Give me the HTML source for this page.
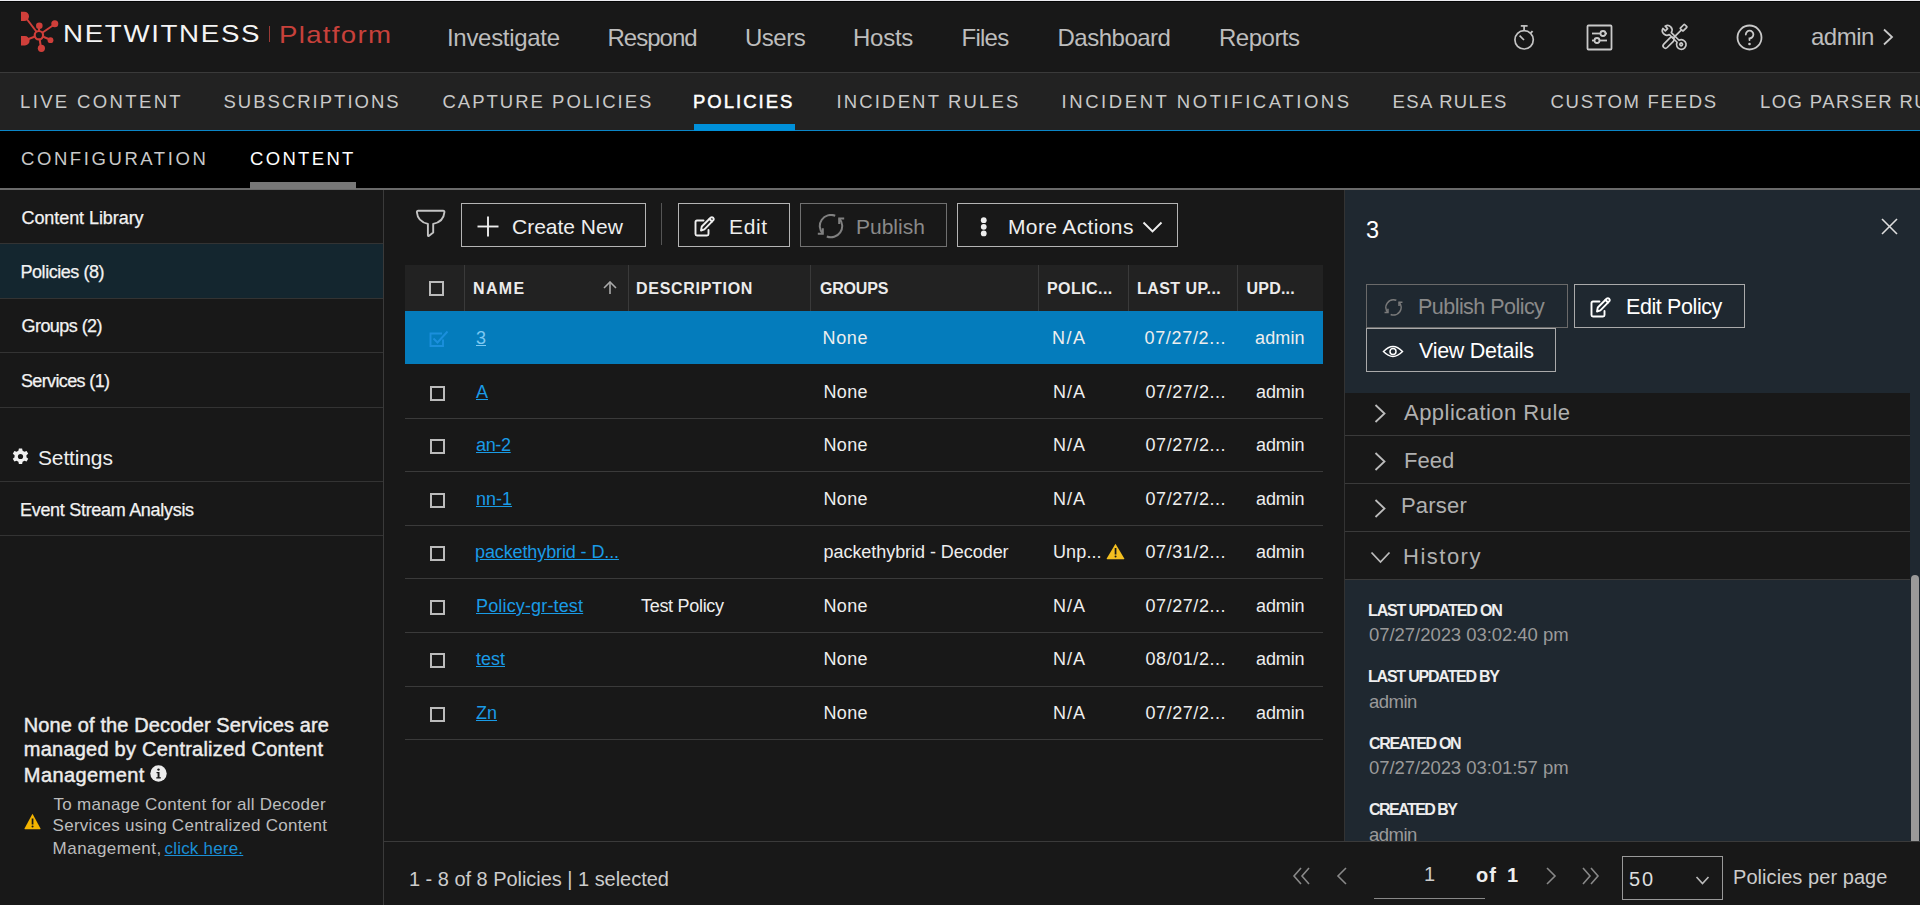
<!DOCTYPE html>
<html><head><meta charset="utf-8"><title>NetWitness Platform - Content Policies</title>
<style>
html,body{margin:0;padding:0;}
body{width:1920px;height:905px;overflow:hidden;position:relative;background:#181818;font-family:"Liberation Sans",sans-serif;}
.r{position:absolute;display:block;}
.t{position:absolute;white-space:nowrap;line-height:1;font-family:"Liberation Sans",sans-serif;}
</style></head><body>
<div class="r" style="left:0px;top:0px;width:1920px;height:1px;background:#ececf0;"></div>
<div class="r" style="left:0px;top:1px;width:1920px;height:1px;background:#050505;"></div>
<div class="r" style="left:0px;top:2px;width:1920px;height:70px;background:#181818;"></div>
<div class="r" style="left:0px;top:72px;width:1920px;height:1px;background:#3a3a3a;"></div>
<div class="r" style="left:0px;top:73px;width:1920px;height:57px;background:#222222;"></div>
<div class="r" style="left:0px;top:130px;width:1920px;height:1px;background:#0b86c8;"></div>
<div class="r" style="left:694px;top:124px;width:101px;height:7px;background:#0090da;"></div>
<div class="r" style="left:0px;top:131px;width:1920px;height:57px;background:#000000;"></div>
<div class="r" style="left:0px;top:188px;width:1920px;height:2px;background:#6a6a6a;"></div>
<div class="r" style="left:250px;top:182px;width:106px;height:7px;background:#777777;"></div>
<div class="r" style="left:0px;top:190px;width:1920px;height:715px;background:#181818;"></div>
<div class="r" style="left:383px;top:190px;width:1px;height:715px;background:#3a3a3a;"></div>
<div class="r" style="left:0px;top:244px;width:383px;height:54px;background:#14262f;"></div>
<div class="r" style="left:0px;top:243px;width:383px;height:1px;background:#333333;"></div>
<div class="r" style="left:0px;top:298px;width:383px;height:1px;background:#333333;"></div>
<div class="r" style="left:0px;top:352px;width:383px;height:1px;background:#333333;"></div>
<div class="r" style="left:0px;top:407px;width:383px;height:1px;background:#333333;"></div>
<div class="r" style="left:0px;top:481px;width:383px;height:1px;background:#333333;"></div>
<div class="r" style="left:0px;top:535px;width:383px;height:1px;background:#333333;"></div>
<div class="r" style="left:1344px;top:190px;width:1px;height:651px;background:#333333;"></div>
<div class="r" style="left:1345px;top:190px;width:575px;height:203px;background:#1f2830;"></div>
<div class="r" style="left:1345px;top:393px;width:565px;height:187px;background:#181818;"></div>
<div class="r" style="left:1345px;top:435px;width:565px;height:1px;background:#3a3a3a;"></div>
<div class="r" style="left:1345px;top:483px;width:565px;height:1px;background:#3a3a3a;"></div>
<div class="r" style="left:1345px;top:531px;width:565px;height:1px;background:#3a3a3a;"></div>
<div class="r" style="left:1345px;top:579px;width:565px;height:1px;background:#3a3a3a;"></div>
<div class="r" style="left:1910px;top:393px;width:10px;height:448px;background:#1f2830;"></div>
<div class="r" style="left:1345px;top:580px;width:565px;height:261px;background:#1f2830;"></div>
<div class="r" style="left:1911px;top:575px;width:8px;height:266px;background:#9a9a9a;border-radius:4px 4px 0 0;"></div>
<div class="r" style="left:384px;top:841px;width:1536px;height:1px;background:#3a3a3a;"></div>
<div class="r" style="left:384px;top:842px;width:1536px;height:63px;background:#181818;"></div>
<svg class="r" style="left:18px;top:8px;" width="44" height="46" viewBox="0 0 44 46">
<g fill="#cf3f3a" stroke="#cf3f3a">
<line x1="8" y1="10" x2="21" y2="27" stroke-width="2"/>
<line x1="21" y1="27" x2="37" y2="16" stroke-width="2"/>
<line x1="21" y1="27" x2="8" y2="32" stroke-width="2"/>
<line x1="21" y1="27" x2="33" y2="32" stroke-width="2"/>
<line x1="21" y1="27" x2="23" y2="40" stroke-width="2"/>
<line x1="21" y1="27" x2="21" y2="18" stroke-width="2"/>
<path d="M3 3.7 h3.3 a4.7 4.7 0 0 1 0 9.4 h-3.3 z" stroke="none"/>
<path d="M3 28 h3.9 a4.7 4.7 0 0 1 0 9.4 h-3.9 z" stroke="none"/>
<circle cx="21.3" cy="17.7" r="3.3" stroke="none"/>
<circle cx="36.8" cy="15.8" r="3.5" stroke="none"/>
<circle cx="32.5" cy="32.2" r="2.9" stroke="none"/>
<circle cx="23.4" cy="40.3" r="3.6" stroke="none"/>
<circle cx="20.9" cy="27.2" r="4.2" fill="#181818" stroke-width="2.2"/>
</g></svg>
<div class="r" style="left:268.5px;top:26px;width:1.5px;height:15.5px;background:#9a3a36;"></div>
<svg class="r" style="left:1512px;top:23px;" width="25" height="29" viewBox="0 0 25 29"><g fill="none" stroke="#c4c4c4" stroke-width="1.7" stroke-linecap="butt">
<circle cx="12.1" cy="16.8" r="9.2"/><line x1="8.8" y1="2.9" x2="15.6" y2="2.9"/><line x1="12.1" y1="2.9" x2="12.1" y2="7.6"/>
<line x1="18.3" y1="10.4" x2="20.6" y2="8.1" stroke-width="2"/><line x1="7.6" y1="12.6" x2="12" y2="17"/></g></svg>
<svg class="r" style="left:1586px;top:24px;" width="27" height="27" viewBox="0 0 27 27"><g fill="none" stroke="#c9c9c9" stroke-width="1.8">
<rect x="1.5" y="1.5" width="24" height="24" rx="1"/>
<line x1="6" y1="9.5" x2="21" y2="9.5"/><line x1="6" y1="16.5" x2="21" y2="16.5"/>
<circle cx="17" cy="9.5" r="2.5" fill="#181818"/><circle cx="11" cy="16.5" r="2.5" fill="#181818"/></g></svg>
<svg class="r" style="left:1660px;top:23px;" width="30" height="30" viewBox="0 0 30 30"><g fill="none" stroke="#c9c9c9" stroke-width="1.7" stroke-linejoin="round" stroke-linecap="round">
<g transform="translate(14.4 13.9) rotate(45)">
<rect x="-2" y="-16" width="4" height="6" rx="0.8"/>
<line x1="0" y1="-10" x2="0" y2="1.5"/>
<rect x="-2.4" y="1.5" width="4.8" height="13.5" rx="2.4"/>
</g>
<g transform="translate(14.8 15) rotate(-45)">
<path d="M -1.6 -15.2 L -1.6 -11.8 L 1.6 -11.8 L 1.6 -15.2 A 4.6 4.6 0 0 1 1.4 -6.3 L 1.4 4.6 A 4.8 4.8 0 1 1 -1.4 4.6 L -1.4 -6.3 A 4.6 4.6 0 0 1 -1.6 -15.2 Z"/>
<circle cx="0" cy="9" r="1.3"/>
</g></g></svg>
<svg class="r" style="left:1736px;top:24px;" width="27" height="27" viewBox="0 0 27 27"><g fill="none" stroke="#c9c9c9" stroke-width="1.8" stroke-linecap="round">
<circle cx="13.5" cy="13.5" r="12"/><path d="M9.8 10.5 A3.8 3.8 0 1 1 13.5 14.3 L13.5 16"/></g>
<circle cx="13.5" cy="20" r="1.3" fill="#c9c9c9"/></svg>
<svg class="r" style="left:1882px;top:28px;" width="13" height="18" viewBox="0 0 13 18"><polyline points="2,1.5 10,9 2,16.5" fill="none" stroke="#c9c9c9" stroke-width="1.8"/></svg>
<svg class="r" style="left:12px;top:448px;" width="17" height="17" viewBox="0 0 17 17"><g transform="translate(8.5 8.5)" fill="#f0f0f0">
<path d="M-1.6 -8 h3.2 l0.5 2.3 a6 6 0 0 1 1.8 1 l2.2 -0.8 l1.6 2.8 l-1.8 1.5 a6 6 0 0 1 0 2 l1.8 1.5 l-1.6 2.8 l-2.2 -0.8 a6 6 0 0 1 -1.8 1 l-0.5 2.3 h-3.2 l-0.5 -2.3 a6 6 0 0 1 -1.8 -1 l-2.2 0.8 l-1.6 -2.8 l1.8 -1.5 a6 6 0 0 1 0 -2 l-1.8 -1.5 l1.6 -2.8 l2.2 0.8 a6 6 0 0 1 1.8 -1 z"/>
<circle r="2.6" fill="#181818"/></g></svg>
<svg class="r" style="left:150px;top:765px;" width="17" height="17" viewBox="0 0 17 17"><circle cx="8.5" cy="8.5" r="8.2" fill="#ececec"/>
<rect x="7.6" y="7" width="1.9" height="6" fill="#181818"/><rect x="6.3" y="12.2" width="4.5" height="1.3" fill="#181818"/><rect x="6.5" y="7" width="2.5" height="1.2" fill="#181818"/><circle cx="8.5" cy="4.6" r="1.2" fill="#181818"/></svg>
<svg class="r" style="left:24px;top:813px;" width="17" height="17" viewBox="0 0 17 17"><path d="M8.5 0.8 L16.5 15.5 Q16.8 16.3 16 16.3 H1 Q0.2 16.3 0.5 15.5 Z" fill="#f4b400"/>
<rect x="7.7" y="5.5" width="1.7" height="6" fill="#181818"/><circle cx="8.55" cy="13.6" r="1" fill="#181818"/></svg>
<svg class="r" style="left:414px;top:207px;" width="32" height="32" viewBox="0 0 32 32"><path d="M4.2 3.8 H29.1 Q30.6 3.8 30.4 5.3 Q29.6 14.6 19.2 16.9 V25.6 L14.8 28.9 Q13.9 29.3 13.9 28.3 V16.9 Q3.6 14.6 2.9 5.3 Q2.8 3.8 4.2 3.8 Z" fill="none" stroke="#c4c4c4" stroke-width="1.9" stroke-linejoin="round"/></svg>
<div class="r" style="left:461px;top:203px;width:185px;height:44px;box-sizing:border-box;border:1px solid #b4b4b4;background:transparent;"></div>
<svg class="r" style="left:477px;top:216px;" width="22" height="21" viewBox="0 0 22 21"><g stroke="#eeeeee" stroke-width="1.9"><line x1="11" y1="0.5" x2="11" y2="20.5"/><line x1="0.5" y1="10.5" x2="21.5" y2="10.5"/></g></svg>
<div class="r" style="left:660.5px;top:203px;width:1.5px;height:42px;background:#555555;"></div>
<div class="r" style="left:678px;top:203px;width:112px;height:44px;box-sizing:border-box;border:1px solid #b4b4b4;background:transparent;"></div>
<svg class="r" style="left:694px;top:216px;" width="22" height="22" viewBox="0 0 22 22"><g fill="none" stroke="#eeeeee" stroke-width="1.9" stroke-linejoin="round" stroke-linecap="round">
<path d="M9.5 4.5 H3 Q1.5 4.5 1.5 6 V18 Q1.5 19.5 3 19.5 H13 Q14.5 19.5 14.5 18 V14"/>
<path d="M7 14.5 L7.8 10.5 L16.8 1.5 Q18 0.7 19.2 1.8 Q20.2 3 19.4 4.2 L10.4 13.3 Z"/><line x1="15.5" y1="3" x2="18" y2="5.5"/></g></svg>
<div class="r" style="left:800px;top:203px;width:147px;height:44px;box-sizing:border-box;border:1px solid #707070;background:transparent;"></div>
<svg class="r" style="left:817px;top:214px;" width="28" height="26" viewBox="0 0 28 26"><g fill="none" stroke="#808080" stroke-width="2"><path d="M22.19 4.46 A11.2 11.2 0 0 1 9.80 22.48 M5.81 19.74 A11.2 11.2 0 0 1 18.20 1.72"/><path d="M27.19 4.46 H22.19 V9.96"/><path d="M0.81 19.74 H5.81 V14.24"/></g></svg>
<div class="r" style="left:957px;top:203px;width:221px;height:44px;box-sizing:border-box;border:1px solid #b4b4b4;background:transparent;"></div>
<svg class="r" style="left:979px;top:215px;" width="10" height="23" viewBox="0 0 10 23"><g fill="#eeeeee"><circle cx="4.75" cy="5.2" r="2.9"/><circle cx="4.75" cy="11.8" r="2.9"/><circle cx="4.75" cy="18.4" r="2.9"/></g></svg>
<svg class="r" style="left:1142px;top:220px;" width="21" height="14" viewBox="0 0 21 14"><polyline points="1.5,2.5 10.5,11.5 19.5,2.5" fill="none" stroke="#eeeeee" stroke-width="1.9"/></svg>
<div class="r" style="left:405px;top:265px;width:918px;height:46px;background:#222222;"></div>
<div class="r" style="left:464px;top:265px;width:1px;height:46px;background:#3a3a3a;"></div>
<div class="r" style="left:628px;top:265px;width:1px;height:46px;background:#3a3a3a;"></div>
<div class="r" style="left:810px;top:265px;width:1px;height:46px;background:#3a3a3a;"></div>
<div class="r" style="left:1038px;top:265px;width:1px;height:46px;background:#3a3a3a;"></div>
<div class="r" style="left:1128px;top:265px;width:1px;height:46px;background:#3a3a3a;"></div>
<div class="r" style="left:1237px;top:265px;width:1px;height:46px;background:#3a3a3a;"></div>
<div class="r" style="left:429px;top:281px;width:15px;height:15px;box-sizing:border-box;border:2px solid #bbbbbb;background:transparent;"></div>
<svg class="r" style="left:602px;top:281px;" width="16" height="14" viewBox="0 0 16 14"><g fill="none" stroke="#aaaaaa" stroke-width="1.6"><line x1="8" y1="1" x2="8" y2="13"/><polyline points="2,7 8,1 14,7"/></g></svg>
<div class="r" style="left:405px;top:311px;width:918px;height:53px;background:#047cbc;"></div>
<div class="r" style="left:405px;top:418px;width:918px;height:1px;background:#3a3a3a;"></div>
<div class="r" style="left:405px;top:471px;width:918px;height:1px;background:#3a3a3a;"></div>
<div class="r" style="left:405px;top:525px;width:918px;height:1px;background:#3a3a3a;"></div>
<div class="r" style="left:405px;top:578px;width:918px;height:1px;background:#3a3a3a;"></div>
<div class="r" style="left:405px;top:632px;width:918px;height:1px;background:#3a3a3a;"></div>
<div class="r" style="left:405px;top:686px;width:918px;height:1px;background:#3a3a3a;"></div>
<div class="r" style="left:405px;top:739px;width:918px;height:1px;background:#3a3a3a;"></div>
<svg class="r" style="left:429px;top:330px;" width="22" height="18" viewBox="0 0 22 18"><g fill="none" stroke="#1b8fdc" stroke-width="1.9"><path d="M13 3.5 H1.5 V16 H14 V9.5"/><polyline points="4.5,8.5 8.5,12.5 18.5,1.5"/></g></svg>
<div class="r" style="left:430px;top:386px;width:15px;height:15px;box-sizing:border-box;border:2px solid #bbbbbb;background:transparent;"></div>
<div class="r" style="left:430px;top:439px;width:15px;height:15px;box-sizing:border-box;border:2px solid #bbbbbb;background:transparent;"></div>
<div class="r" style="left:430px;top:493px;width:15px;height:15px;box-sizing:border-box;border:2px solid #bbbbbb;background:transparent;"></div>
<div class="r" style="left:430px;top:546px;width:15px;height:15px;box-sizing:border-box;border:2px solid #bbbbbb;background:transparent;"></div>
<div class="r" style="left:430px;top:600px;width:15px;height:15px;box-sizing:border-box;border:2px solid #bbbbbb;background:transparent;"></div>
<div class="r" style="left:430px;top:653px;width:15px;height:15px;box-sizing:border-box;border:2px solid #bbbbbb;background:transparent;"></div>
<div class="r" style="left:430px;top:707px;width:15px;height:15px;box-sizing:border-box;border:2px solid #bbbbbb;background:transparent;"></div>
<svg class="r" style="left:1106px;top:543px;" width="19" height="17" viewBox="0 0 19 17"><path d="M9.5 0.8 L18.3 15.4 Q18.6 16.2 17.8 16.2 H1.2 Q0.4 16.2 0.7 15.4 Z" fill="#f4c020"/>
<rect x="8.7" y="5" width="1.7" height="6.5" fill="#181818"/><circle cx="9.55" cy="13.5" r="1" fill="#181818"/></svg>
<svg class="r" style="left:1880px;top:217px;" width="19" height="19" viewBox="0 0 19 19"><g stroke="#dddddd" stroke-width="1.6"><line x1="2" y1="2" x2="17" y2="17"/><line x1="17" y1="2" x2="2" y2="17"/></g></svg>
<div class="r" style="left:1366px;top:284px;width:202px;height:44px;box-sizing:border-box;border:1px solid #6a6a6a;background:transparent;"></div>
<svg class="r" style="left:1384px;top:299px;" width="19" height="18" viewBox="0 0 28 26"><g fill="none" stroke="#7a7a7a" stroke-width="2.3"><path d="M22.19 4.46 A11.2 11.2 0 0 1 9.80 22.48 M5.81 19.74 A11.2 11.2 0 0 1 18.20 1.72"/><path d="M27.19 4.46 H22.19 V9.96"/><path d="M0.81 19.74 H5.81 V14.24"/></g></svg>
<div class="r" style="left:1574px;top:284px;width:171px;height:44px;box-sizing:border-box;border:1px solid #aaaaaa;background:transparent;"></div>
<svg class="r" style="left:1590px;top:297px;" width="22" height="22" viewBox="0 0 22 22"><g fill="none" stroke="#ffffff" stroke-width="1.9" stroke-linejoin="round" stroke-linecap="round">
<path d="M9.5 4.5 H3 Q1.5 4.5 1.5 6 V18 Q1.5 19.5 3 19.5 H13 Q14.5 19.5 14.5 18 V14"/>
<path d="M7 14.5 L7.8 10.5 L16.8 1.5 Q18 0.7 19.2 1.8 Q20.2 3 19.4 4.2 L10.4 13.3 Z"/><line x1="15.5" y1="3" x2="18" y2="5.5"/></g></svg>
<div class="r" style="left:1366px;top:328px;width:190px;height:44px;box-sizing:border-box;border:1px solid #aaaaaa;background:transparent;"></div>
<svg class="r" style="left:1382px;top:344px;" width="22" height="15" viewBox="0 0 22 15"><g fill="none" stroke="#ffffff" stroke-width="1.5"><path d="M1.5 7.5 Q11 -2.3 20.5 7.5 Q11 17.3 1.5 7.5 Z"/><circle cx="11" cy="7.5" r="3"/></g></svg>
<svg class="r" style="left:1373px;top:403px;" width="15" height="21" viewBox="0 0 15 21"><polyline points="2.5,2 11.5,10.5 2.5,19" fill="none" stroke="#bcbcbc" stroke-width="1.8"/></svg>
<svg class="r" style="left:1373px;top:451px;" width="15" height="21" viewBox="0 0 15 21"><polyline points="2.5,2 11.5,10.5 2.5,19" fill="none" stroke="#bcbcbc" stroke-width="1.8"/></svg>
<svg class="r" style="left:1373px;top:498px;" width="15" height="21" viewBox="0 0 15 21"><polyline points="2.5,2 11.5,10.5 2.5,19" fill="none" stroke="#bcbcbc" stroke-width="1.8"/></svg>
<svg class="r" style="left:1370px;top:550px;" width="22" height="15" viewBox="0 0 22 15"><polyline points="1.5,2.5 10.5,12 19.5,2.5" fill="none" stroke="#bcbcbc" stroke-width="1.8"/></svg>
<svg class="r" style="left:1292px;top:866px;" width="20" height="20" viewBox="0 0 20 20"><g fill="none" stroke="#888888" stroke-width="1.6"><polyline points="9,2 2,10 9,18"/><polyline points="17,2 10,10 17,18"/></g></svg>
<svg class="r" style="left:1335px;top:866px;" width="14" height="20" viewBox="0 0 14 20"><polyline points="11,2 3,10 11,18" fill="none" stroke="#888888" stroke-width="1.6"/></svg>
<div class="r" style="left:1374px;top:897.5px;width:111px;height:1.5px;background:#888888;"></div>
<svg class="r" style="left:1545px;top:866px;" width="13" height="20" viewBox="0 0 13 20"><polyline points="2,2 10,10 2,18" fill="none" stroke="#888888" stroke-width="1.6"/></svg>
<svg class="r" style="left:1581px;top:866px;" width="20" height="20" viewBox="0 0 20 20"><g fill="none" stroke="#888888" stroke-width="1.6"><polyline points="2,2 9,10 2,18"/><polyline points="10,2 17,10 10,18"/></g></svg>
<div class="r" style="left:1622px;top:856px;width:101px;height:44px;box-sizing:border-box;border:1px solid #999999;background:transparent;"></div>
<svg class="r" style="left:1695px;top:875px;" width="15" height="11" viewBox="0 0 15 11"><polyline points="1.5,2 7.5,8.5 13.5,2" fill="none" stroke="#bbbbbb" stroke-width="1.6"/></svg>
<div id="h_nw" class="t" style="left:63.00px;top:23.11px;font-size:23.5px;color:#f4f4f4;font-weight:400;letter-spacing:1.389px;transform:scaleX(1.18);transform-origin:0 0;">NETWITNESS</div>
<div id="h_pf" class="t" style="left:279.00px;top:22.68px;font-size:24px;color:#c8413b;font-weight:400;letter-spacing:1.143px;transform:scaleX(1.15);transform-origin:0 0;">Platform</div>
<div id="h_inv" class="t" style="left:447.00px;top:25.68px;font-size:24px;color:#bdbdbd;font-weight:400;letter-spacing:-0.300px;">Investigate</div>
<div id="h_res" class="t" style="left:607.50px;top:25.68px;font-size:24px;color:#bdbdbd;font-weight:400;letter-spacing:-1.000px;">Respond</div>
<div id="h_usr" class="t" style="left:745.00px;top:25.68px;font-size:24px;color:#bdbdbd;font-weight:400;letter-spacing:-0.500px;">Users</div>
<div id="h_hst" class="t" style="left:853.00px;top:25.68px;font-size:24px;color:#bdbdbd;font-weight:400;letter-spacing:-0.250px;">Hosts</div>
<div id="h_fil" class="t" style="left:961.50px;top:25.68px;font-size:24px;color:#bdbdbd;font-weight:400;letter-spacing:-0.750px;">Files</div>
<div id="h_dsh" class="t" style="left:1057.50px;top:25.68px;font-size:24px;color:#bdbdbd;font-weight:400;letter-spacing:-0.500px;">Dashboard</div>
<div id="h_rep" class="t" style="left:1219.00px;top:25.68px;font-size:24px;color:#bdbdbd;font-weight:400;letter-spacing:-0.500px;">Reports</div>
<div id="h_adm" class="t" style="left:1811.00px;top:25.18px;font-size:24px;color:#bdbdbd;font-weight:400;letter-spacing:-0.500px;">admin</div>
<div id="n_live" class="t" style="left:20.00px;top:93.34px;font-size:18.5px;color:#c9c9c9;font-weight:400;letter-spacing:2.364px;">LIVE CONTENT</div>
<div id="n_sub" class="t" style="left:223.50px;top:93.34px;font-size:18.5px;color:#c9c9c9;font-weight:400;letter-spacing:2.000px;">SUBSCRIPTIONS</div>
<div id="n_cap" class="t" style="left:442.50px;top:93.34px;font-size:18.5px;color:#c9c9c9;font-weight:400;letter-spacing:2.000px;">CAPTURE POLICIES</div>
<div id="n_pol" class="t" style="left:693.00px;top:93.34px;font-size:18.5px;color:#ffffff;font-weight:400;letter-spacing:2.000px;-webkit-text-stroke:0.5px #ffffff;">POLICIES</div>
<div id="n_inc" class="t" style="left:836.50px;top:93.34px;font-size:18.5px;color:#c9c9c9;font-weight:400;letter-spacing:2.154px;">INCIDENT RULES</div>
<div id="n_not" class="t" style="left:1061.50px;top:93.34px;font-size:18.5px;color:#c9c9c9;font-weight:400;letter-spacing:2.571px;">INCIDENT NOTIFICATIONS</div>
<div id="n_esa" class="t" style="left:1392.50px;top:93.34px;font-size:18.5px;color:#c9c9c9;font-weight:400;letter-spacing:1.375px;">ESA RULES</div>
<div id="n_cf" class="t" style="left:1550.50px;top:93.34px;font-size:18.5px;color:#c9c9c9;font-weight:400;letter-spacing:1.727px;">CUSTOM FEEDS</div>
<div id="n_log" class="t" style="left:1760.00px;top:93.34px;font-size:18.5px;color:#c9c9c9;font-weight:400;letter-spacing:1.400px;">LOG PARSER RULES</div>
<div id="c_conf" class="t" style="left:21.00px;top:149.84px;font-size:18.5px;color:#c9c9c9;font-weight:400;letter-spacing:2.583px;">CONFIGURATION</div>
<div id="c_cont" class="t" style="left:250.00px;top:149.84px;font-size:18.5px;color:#ffffff;font-weight:400;letter-spacing:2.333px;">CONTENT</div>
<div id="l_cl" class="t" style="left:21.50px;top:208.76px;font-size:18px;color:#f2f2f2;font-weight:400;letter-spacing:-0.071px;-webkit-text-stroke:0.25px #f2f2f2;">Content Library</div>
<div id="l_pol" class="t" style="left:20.50px;top:262.76px;font-size:18px;color:#f2f2f2;font-weight:400;letter-spacing:-0.455px;-webkit-text-stroke:0.25px #f2f2f2;">Policies (8)</div>
<div id="l_grp" class="t" style="left:21.50px;top:316.76px;font-size:18px;color:#f2f2f2;font-weight:400;letter-spacing:-0.556px;-webkit-text-stroke:0.25px #f2f2f2;">Groups (2)</div>
<div id="l_srv" class="t" style="left:21.00px;top:371.76px;font-size:18px;color:#f2f2f2;font-weight:400;letter-spacing:-0.636px;-webkit-text-stroke:0.25px #f2f2f2;">Services (1)</div>
<div id="l_set" class="t" style="left:38.00px;top:447.22px;font-size:21px;color:#eeeeee;font-weight:400;letter-spacing:-0.143px;">Settings</div>
<div id="l_esa" class="t" style="left:20.00px;top:500.76px;font-size:18px;color:#f2f2f2;font-weight:400;letter-spacing:-0.300px;-webkit-text-stroke:0.25px #f2f2f2;">Event Stream Analysis</div>
<div id="l_i1" class="t" style="left:23.80px;top:714.67px;font-size:20px;color:#ececec;font-weight:400;letter-spacing:0.123px;-webkit-text-stroke:0.45px #ececec;">None of the Decoder Services are</div>
<div id="l_i2" class="t" style="left:23.80px;top:739.47px;font-size:20px;color:#ececec;font-weight:400;letter-spacing:0.234px;-webkit-text-stroke:0.45px #ececec;">managed by Centralized Content</div>
<div id="l_i3" class="t" style="left:23.80px;top:764.77px;font-size:20px;color:#ececec;font-weight:400;letter-spacing:0.422px;-webkit-text-stroke:0.45px #ececec;">Management</div>
<div id="l_s1" class="t" style="left:53.60px;top:795.61px;font-size:17px;color:#bdbdbd;font-weight:400;letter-spacing:0.262px;">To manage Content for all Decoder</div>
<div id="l_s2" class="t" style="left:52.60px;top:817.21px;font-size:17px;color:#bdbdbd;font-weight:400;letter-spacing:0.267px;">Services using Centralized Content</div>
<div id="l_s3" class="t" style="left:52.60px;top:839.61px;font-size:17px;color:#bdbdbd;font-weight:400;letter-spacing:0.460px;">Management,</div>
<div id="l_s4" class="t" style="left:164.50px;top:839.61px;font-size:17px;color:#1a8fd6;font-weight:400;letter-spacing:0.200px;text-decoration:underline;">click here.</div>
<div id="b_cn" class="t" style="left:512.00px;top:216.22px;font-size:21px;color:#eeeeee;font-weight:400;letter-spacing:0.000px;">Create New</div>
<div id="b_ed" class="t" style="left:729.00px;top:216.22px;font-size:21px;color:#eeeeee;font-weight:400;letter-spacing:0.667px;">Edit</div>
<div id="b_pb" class="t" style="left:856.00px;top:216.22px;font-size:21px;color:#8a8a8a;font-weight:400;letter-spacing:0.000px;">Publish</div>
<div id="b_ma" class="t" style="left:1008.00px;top:216.22px;font-size:21px;color:#eeeeee;font-weight:400;letter-spacing:0.364px;">More Actions</div>
<div id="th_name" class="t" style="left:473.00px;top:280.96px;font-size:16px;color:#ececec;font-weight:700;letter-spacing:1.333px;">NAME</div>
<div id="th_desc" class="t" style="left:636.00px;top:280.96px;font-size:16px;color:#ececec;font-weight:700;letter-spacing:0.700px;">DESCRIPTION</div>
<div id="th_grp" class="t" style="left:820.00px;top:280.96px;font-size:16px;color:#ececec;font-weight:700;letter-spacing:-0.200px;">GROUPS</div>
<div id="th_pol" class="t" style="left:1047.00px;top:280.96px;font-size:16px;color:#ececec;font-weight:700;letter-spacing:0.429px;">POLIC...</div>
<div id="th_lu" class="t" style="left:1137.00px;top:280.96px;font-size:16px;color:#ececec;font-weight:700;letter-spacing:0.444px;">LAST UP...</div>
<div id="th_upd" class="t" style="left:1246.50px;top:280.96px;font-size:16px;color:#ececec;font-weight:700;letter-spacing:0.200px;">UPD...</div>
<div id="r_3" class="t" style="left:1366.00px;top:219.11px;font-size:23.5px;color:#ffffff;font-weight:400;letter-spacing:0.000px;">3</div>
<div id="r_pp" class="t" style="left:1418.00px;top:296.80px;font-size:21.5px;color:#8a8a8a;font-weight:400;letter-spacing:-0.538px;">Publish Policy</div>
<div id="r_ep" class="t" style="left:1626.00px;top:296.80px;font-size:21.5px;color:#ffffff;font-weight:400;letter-spacing:-0.400px;">Edit Policy</div>
<div id="r_vd" class="t" style="left:1419.00px;top:340.80px;font-size:21.5px;color:#ffffff;font-weight:400;letter-spacing:-0.273px;">View Details</div>
<div id="r_ar" class="t" style="left:1404.00px;top:402.38px;font-size:22px;color:#b0b0b0;font-weight:400;letter-spacing:0.467px;">Application Rule</div>
<div id="r_fd" class="t" style="left:1404.00px;top:450.38px;font-size:22px;color:#b0b0b0;font-weight:400;letter-spacing:0.000px;">Feed</div>
<div id="r_ps" class="t" style="left:1401.00px;top:495.38px;font-size:22px;color:#b0b0b0;font-weight:400;letter-spacing:0.200px;">Parser</div>
<div id="r_hs" class="t" style="left:1403.00px;top:546.38px;font-size:22px;color:#b0b0b0;font-weight:400;letter-spacing:1.500px;">History</div>
<div id="r_l1" class="t" style="left:1368.00px;top:603.46px;font-size:16px;color:#eeeeee;font-weight:700;letter-spacing:-1.143px;">LAST UPDATED ON</div>
<div id="r_v1" class="t" style="left:1369.00px;top:626.34px;font-size:18.5px;color:#9a9a9a;font-weight:400;letter-spacing:-0.048px;">07/27/2023 03:02:40 pm</div>
<div id="r_l2" class="t" style="left:1368.00px;top:669.46px;font-size:16px;color:#eeeeee;font-weight:700;letter-spacing:-1.214px;">LAST UPDATED BY</div>
<div id="r_v2" class="t" style="left:1369.00px;top:693.34px;font-size:18.5px;color:#9a9a9a;font-weight:400;letter-spacing:-0.500px;">admin</div>
<div id="r_l3" class="t" style="left:1369.00px;top:736.46px;font-size:16px;color:#eeeeee;font-weight:700;letter-spacing:-1.333px;">CREATED ON</div>
<div id="r_v3" class="t" style="left:1369.00px;top:758.84px;font-size:18.5px;color:#9a9a9a;font-weight:400;letter-spacing:-0.048px;">07/27/2023 03:01:57 pm</div>
<div id="r_l4" class="t" style="left:1369.00px;top:802.46px;font-size:16px;color:#eeeeee;font-weight:700;letter-spacing:-1.556px;">CREATED BY</div>
<div id="r_v4" class="t" style="left:1369.00px;top:825.84px;font-size:18.5px;color:#9a9a9a;font-weight:400;letter-spacing:-0.500px;">admin</div>
<div id="f_cnt" class="t" style="left:409.00px;top:868.57px;font-size:20px;color:#cccccc;font-weight:400;letter-spacing:-0.032px;">1 - 8 of 8 Policies | 1 selected</div>
<div id="f_in" class="t" style="left:1424.00px;top:864.07px;font-size:20px;color:#cccccc;font-weight:400;letter-spacing:0.000px;">1</div>
<div id="f_of" class="t" style="left:1476.00px;top:865.07px;font-size:20px;color:#eeeeee;font-weight:700;letter-spacing:1.000px;">of</div>
<div id="f_1" class="t" style="left:1507.00px;top:865.07px;font-size:20px;color:#eeeeee;font-weight:700;letter-spacing:0.000px;">1</div>
<div id="f_50" class="t" style="left:1629.00px;top:869.07px;font-size:20px;color:#dddddd;font-weight:400;letter-spacing:2.000px;">50</div>
<div id="f_ppp" class="t" style="left:1733.00px;top:867.07px;font-size:20px;color:#cccccc;font-weight:400;letter-spacing:0.062px;">Policies per page</div>
<div id="r0_nm" class="t" style="left:476.00px;top:329.06px;font-size:18px;color:#7cc8f2;font-weight:400;letter-spacing:0.000px;text-decoration:underline;">3</div>
<div id="r0_gr" class="t" style="left:822.50px;top:329.06px;font-size:18px;color:#eeeeee;font-weight:400;letter-spacing:0.667px;">None</div>
<div id="r0_po" class="t" style="left:1052.00px;top:329.06px;font-size:18px;color:#eeeeee;font-weight:400;letter-spacing:1.500px;">N/A</div>
<div id="r0_dt" class="t" style="left:1144.50px;top:329.06px;font-size:18px;color:#eeeeee;font-weight:400;letter-spacing:0.667px;">07/27/2...</div>
<div id="r0_ad" class="t" style="left:1255.00px;top:329.06px;font-size:18px;color:#eeeeee;font-weight:400;letter-spacing:0.150px;">admin</div>
<div id="r1_nm" class="t" style="left:476.00px;top:382.63px;font-size:18px;color:#1a9be6;font-weight:400;letter-spacing:0.000px;text-decoration:underline;">A</div>
<div id="r1_gr" class="t" style="left:823.50px;top:382.63px;font-size:18px;color:#eeeeee;font-weight:400;letter-spacing:0.333px;">None</div>
<div id="r1_po" class="t" style="left:1053.00px;top:382.63px;font-size:18px;color:#eeeeee;font-weight:400;letter-spacing:1.000px;">N/A</div>
<div id="r1_dt" class="t" style="left:1145.50px;top:382.63px;font-size:18px;color:#eeeeee;font-weight:400;letter-spacing:0.556px;">07/27/2...</div>
<div id="r1_ad" class="t" style="left:1256.00px;top:382.63px;font-size:18px;color:#eeeeee;font-weight:400;letter-spacing:-0.100px;">admin</div>
<div id="r2_nm" class="t" style="left:476.00px;top:436.20px;font-size:18px;color:#1a9be6;font-weight:400;letter-spacing:-0.333px;text-decoration:underline;">an-2</div>
<div id="r2_gr" class="t" style="left:823.50px;top:436.20px;font-size:18px;color:#eeeeee;font-weight:400;letter-spacing:0.333px;">None</div>
<div id="r2_po" class="t" style="left:1053.00px;top:436.20px;font-size:18px;color:#eeeeee;font-weight:400;letter-spacing:1.000px;">N/A</div>
<div id="r2_dt" class="t" style="left:1145.50px;top:436.20px;font-size:18px;color:#eeeeee;font-weight:400;letter-spacing:0.556px;">07/27/2...</div>
<div id="r2_ad" class="t" style="left:1256.00px;top:436.20px;font-size:18px;color:#eeeeee;font-weight:400;letter-spacing:-0.100px;">admin</div>
<div id="r3_nm" class="t" style="left:476.00px;top:489.77px;font-size:18px;color:#1a9be6;font-weight:400;letter-spacing:0.000px;text-decoration:underline;">nn-1</div>
<div id="r3_gr" class="t" style="left:823.50px;top:489.77px;font-size:18px;color:#eeeeee;font-weight:400;letter-spacing:0.333px;">None</div>
<div id="r3_po" class="t" style="left:1053.00px;top:489.77px;font-size:18px;color:#eeeeee;font-weight:400;letter-spacing:1.000px;">N/A</div>
<div id="r3_dt" class="t" style="left:1145.50px;top:489.77px;font-size:18px;color:#eeeeee;font-weight:400;letter-spacing:0.556px;">07/27/2...</div>
<div id="r3_ad" class="t" style="left:1256.00px;top:489.77px;font-size:18px;color:#eeeeee;font-weight:400;letter-spacing:-0.100px;">admin</div>
<div id="r4_nm" class="t" style="left:475.00px;top:543.34px;font-size:18px;color:#1a9be6;font-weight:400;letter-spacing:-0.111px;text-decoration:underline;">packethybrid - D...</div>
<div id="r4_gr" class="t" style="left:823.50px;top:543.34px;font-size:18px;color:#eeeeee;font-weight:400;letter-spacing:-0.048px;">packethybrid - Decoder</div>
<div id="r4_po" class="t" style="left:1053.00px;top:543.34px;font-size:18px;color:#eeeeee;font-weight:400;letter-spacing:0.120px;">Unp...</div>
<div id="r4_dt" class="t" style="left:1145.50px;top:543.34px;font-size:18px;color:#eeeeee;font-weight:400;letter-spacing:0.556px;">07/31/2...</div>
<div id="r4_ad" class="t" style="left:1256.00px;top:543.34px;font-size:18px;color:#eeeeee;font-weight:400;letter-spacing:-0.100px;">admin</div>
<div id="r5_nm" class="t" style="left:476.00px;top:596.91px;font-size:18px;color:#1a9be6;font-weight:400;letter-spacing:0.154px;text-decoration:underline;">Policy-gr-test</div>
<div id="r5_ds" class="t" style="left:641.00px;top:596.91px;font-size:18px;color:#eeeeee;font-weight:400;letter-spacing:-0.300px;">Test Policy</div>
<div id="r5_gr" class="t" style="left:823.50px;top:596.91px;font-size:18px;color:#eeeeee;font-weight:400;letter-spacing:0.333px;">None</div>
<div id="r5_po" class="t" style="left:1053.00px;top:596.91px;font-size:18px;color:#eeeeee;font-weight:400;letter-spacing:1.000px;">N/A</div>
<div id="r5_dt" class="t" style="left:1145.50px;top:596.91px;font-size:18px;color:#eeeeee;font-weight:400;letter-spacing:0.556px;">07/27/2...</div>
<div id="r5_ad" class="t" style="left:1256.00px;top:596.91px;font-size:18px;color:#eeeeee;font-weight:400;letter-spacing:-0.100px;">admin</div>
<div id="r6_nm" class="t" style="left:476.00px;top:650.48px;font-size:18px;color:#1a9be6;font-weight:400;letter-spacing:0.000px;text-decoration:underline;">test</div>
<div id="r6_gr" class="t" style="left:823.50px;top:650.48px;font-size:18px;color:#eeeeee;font-weight:400;letter-spacing:0.333px;">None</div>
<div id="r6_po" class="t" style="left:1053.00px;top:650.48px;font-size:18px;color:#eeeeee;font-weight:400;letter-spacing:1.000px;">N/A</div>
<div id="r6_dt" class="t" style="left:1145.50px;top:650.48px;font-size:18px;color:#eeeeee;font-weight:400;letter-spacing:0.556px;">08/01/2...</div>
<div id="r6_ad" class="t" style="left:1256.00px;top:650.48px;font-size:18px;color:#eeeeee;font-weight:400;letter-spacing:-0.100px;">admin</div>
<div id="r7_nm" class="t" style="left:476.00px;top:704.05px;font-size:18px;color:#1a9be6;font-weight:400;letter-spacing:0.000px;text-decoration:underline;">Zn</div>
<div id="r7_gr" class="t" style="left:823.50px;top:704.05px;font-size:18px;color:#eeeeee;font-weight:400;letter-spacing:0.333px;">None</div>
<div id="r7_po" class="t" style="left:1053.00px;top:704.05px;font-size:18px;color:#eeeeee;font-weight:400;letter-spacing:1.000px;">N/A</div>
<div id="r7_dt" class="t" style="left:1145.50px;top:704.05px;font-size:18px;color:#eeeeee;font-weight:400;letter-spacing:0.556px;">07/27/2...</div>
<div id="r7_ad" class="t" style="left:1256.00px;top:704.05px;font-size:18px;color:#eeeeee;font-weight:400;letter-spacing:-0.100px;">admin</div>
</body></html>
